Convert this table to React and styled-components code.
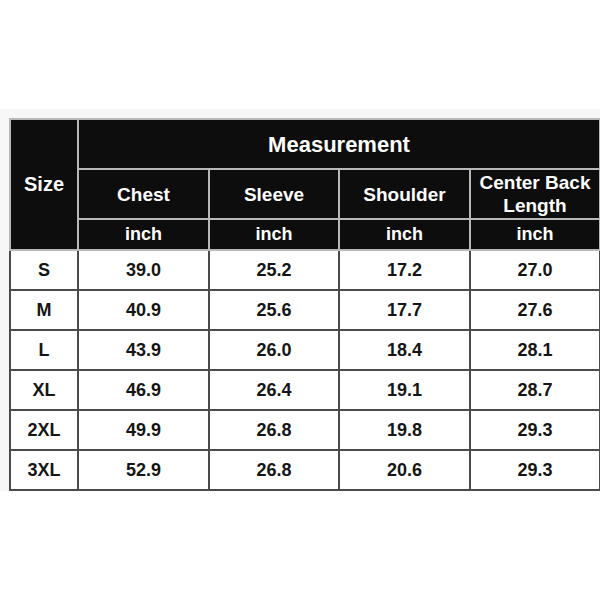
import React from "react";
import styled, { createGlobalStyle } from "styled-components";

const Global = createGlobalStyle`
  html, body { margin: 0; padding: 0; background: #ffffff; }
  body { font-family: "Liberation Sans", Arial, sans-serif; }
`;

const Band = styled.div`
  margin-top: 109px;
  padding: 9px 1px 0 9px;
  background: #f7f7f7;
  width: 590px;
`;

const Table = styled.table`
  border-collapse: collapse;
  table-layout: fixed;
  width: 590px;
  font-family: "Liberation Sans", Arial, sans-serif;
  font-weight: 700;
`;

const Col = styled.col`
  width: ${(p) => p.$w}px;
`;

const HeadCell = styled.th`
  background: #0d0d0d;
  color: #ffffff;
  border: 2px solid #b8b8b8;
  text-align: center;
  vertical-align: middle;
  padding: 0;
  height: ${(p) => p.$h}px;
  font-size: ${(p) => p.$fs || 19}px;
  line-height: 23px;
  font-weight: 700;
`;

const BodyRow = styled.tr`
  height: 40px;
`;

const Cell = styled.td`
  background: #ffffff;
  color: #151515;
  border: 2px solid #4a4a4a;
  text-align: center;
  vertical-align: middle;
  padding: 0;
  font-size: 18px;
  font-weight: 700;
`;

const rows = [
  ["S", "39.0", "25.2", "17.2", "27.0"],
  ["M", "40.9", "25.6", "17.7", "27.6"],
  ["L", "43.9", "26.0", "18.4", "28.1"],
  ["XL", "46.9", "26.4", "19.1", "28.7"],
  ["2XL", "49.9", "26.8", "19.8", "29.3"],
  ["3XL", "52.9", "26.8", "20.6", "29.3"],
];

const names = ["Chest", "Sleeve", "Shoulder", "Center Back Length"];

export default function App() {
  return (
    <>
      <Global />
      <Band>
        <Table>
          <colgroup>
            <Col $w={68} />
            <Col $w={131} />
            <Col $w={130} />
            <Col $w={131} />
            <Col $w={130} />
          </colgroup>
          <thead>
            <tr>
              <HeadCell rowSpan={3} $fs={20}>Size</HeadCell>
              <HeadCell colSpan={4} $h={48} $fs={22}>Measurement</HeadCell>
            </tr>
            <tr>
              {names.map((n) => (
                <HeadCell key={n} $h={48}>
                  {n === "Center Back Length" ? (
                    <>
                      Center Back
                      <br />
                      Length
                    </>
                  ) : (
                    n
                  )}
                </HeadCell>
              ))}
            </tr>
            <tr>
              {names.map((n) => (
                <HeadCell key={n} $h={29} $fs={18}>inch</HeadCell>
              ))}
            </tr>
          </thead>
          <tbody>
            {rows.map((r) => (
              <BodyRow key={r[0]}>
                {r.map((v, i) => (
                  <Cell key={i}>{v}</Cell>
                ))}
              </BodyRow>
            ))}
          </tbody>
        </Table>
      </Band>
    </>
  );
}
